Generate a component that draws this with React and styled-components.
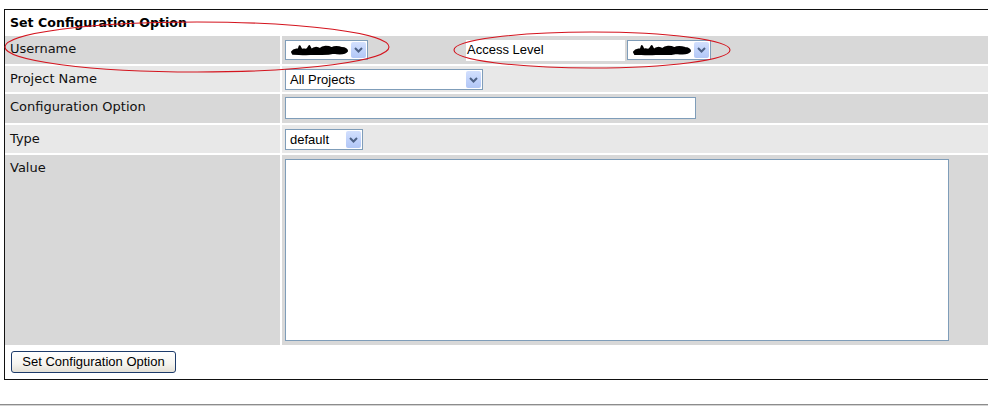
import React from "react";
import styled, { createGlobalStyle } from "styled-components";

const GlobalStyle = createGlobalStyle`
  html, body { margin: 0; padding: 0; background: #fff; overflow: hidden; }
  body { width: 988px; height: 406px; }
`;

const Page = styled.div`
  position: relative;
  width: 988px;
  height: 406px;
  padding: 9px 0 0 4px;
  box-sizing: border-box;
  overflow: hidden;
`;

const Panel = styled.div`
  width: 1100px;
  border: 1px solid #111;
  display: flex;
  flex-direction: column;
  gap: 2px;
`;

const TitleRow = styled.div`
  height: 24px;
  box-sizing: border-box;
  padding: 5px 0 0 5px;
  font-family: "DejaVu Sans", Verdana, sans-serif;
  font-weight: bold;
  font-size: 12.6px;
  line-height: 15px;
  color: #000;
`;

const Row = styled.div`
  display: grid;
  grid-template-columns: 275px 1fr;
  column-gap: 2px;
  height: ${(p) => p.$h}px;
`;

const Label = styled.div`
  background: ${(p) => (p.$light ? "#e8e8e8" : "#d8d8d8")};
  box-sizing: border-box;
  padding: ${(p) => p.$pt ?? 5}px 0 0 5px;
  font-family: "DejaVu Sans", Verdana, sans-serif;
  font-size: 13px;
  line-height: 15px;
  color: #111;
`;

const Cell = styled.div`
  background: ${(p) => (p.$light ? "#e8e8e8" : "#d8d8d8")};
  box-sizing: border-box;
  padding: ${(p) => p.$pt}px 0 0 3px;
  display: flex;
  align-items: flex-start;
`;

const SelectBox = styled.div`
  width: ${(p) => p.$w}px;
  height: ${(p) => p.$h || 20}px;
  margin-left: ${(p) => p.$ml || 0}px;
  box-sizing: border-box;
  border: 1px solid #7f9db9;
  background: #fff;
  display: flex;
  align-items: stretch;
  font-family: "Liberation Sans", Arial, sans-serif;
  font-size: 13px;
  color: #000;
`;

const SelectText = styled.div`
  flex: 1;
  display: flex;
  align-items: center;
  padding-left: 4px;
  overflow: hidden;
  white-space: nowrap;
`;

const Arrow = styled.div`
  width: 15px;
  margin: 1px;
  border-radius: 2px;
  background: linear-gradient(180deg, #d3e0fd 0%, #c1d3fb 50%, #b2c7f6 100%);
  display: flex;
  align-items: center;
  justify-content: center;
`;

const TextBox = styled.div`
  width: ${(p) => p.$w}px;
  height: ${(p) => p.$h}px;
  box-sizing: border-box;
  border: 1px solid #7f9db9;
  background: #fff;
`;

const AccessLabel = styled.div`
  width: 159px;
  height: 21px;
  margin-left: 98px;
  box-sizing: border-box;
  background: #fff;
  padding: 2px 0 0 1px;
  font-family: "Liberation Sans", Arial, sans-serif;
  font-size: 13px;
  line-height: 15px;
  color: #000;
`;

const ButtonRow = styled.div`
  height: 32px;
  box-sizing: border-box;
  padding: 4px 0 0 6px;
`;

const Button = styled.button`
  width: 165px;
  height: 22px;
  box-sizing: border-box;
  border: 1px solid #1d3b6a;
  border-radius: 3px;
  background: linear-gradient(180deg, #ffffff 0%, #f5f4ef 60%, #e3e0d6 100%);
  font-family: "Liberation Sans", Arial, sans-serif;
  font-size: 13px;
  color: #000;
  padding: 0;
  line-height: 18px;
`;

const Rule = styled.div`
  margin-top: 24px;
  margin-left: -4px;
  width: 988px;
  border-top: 1px solid #8c8c8c;
  border-bottom: 1px solid #d4d4d4;
`;

const Overlay = styled.svg`
  position: absolute;
  left: 0;
  top: 0;
  pointer-events: none;
`;

const Chevron = () => (
  <svg width="9" height="6" viewBox="0 0 9 6">
    <path d="M1 1 L4.5 4.5 L8 1" fill="none" stroke="#4d6185" strokeWidth="2" />
  </svg>
);

const Scribble = () => (
  <svg width="62" height="12" viewBox="0 0 62 12">
    <path
      d="M2 8 C4 5 7 6 9 5 L10 2 L12 6 C14 4 16 7 18 5 L20 2 L22 6 C25 3 28 3 31 5 C34 2 39 2 43 4 C47 2 51 3 54 4 C57 4 59 6 59 7 C57 10 51 10 45 9 C38 11 30 10 24 10 C17 11 9 10 3 10 Z"
      fill="#000"
      stroke="#000"
      strokeWidth="2"
      strokeLinejoin="round"
    />
  </svg>
);

const Select = ({ w, h, ml, children }) => (
  <SelectBox $w={w} $h={h} $ml={ml}>
    <SelectText>{children}</SelectText>
    <Arrow>
      <Chevron />
    </Arrow>
  </SelectBox>
);

export default function App() {
  return (
    <>
      <GlobalStyle />
      <Page>
        <Panel>
          <TitleRow>Set Configuration Option</TitleRow>
          <Row $h={28}>
            <Label>Username</Label>
            <Cell $pt={4}>
              <Select w={83} h={20}>
                <Scribble />
              </Select>
              <AccessLabel>Access Level</AccessLabel>
              <Select w={84} h={20} ml={2}>
                <Scribble />
              </Select>
            </Cell>
          </Row>
          <Row $h={26}>
            <Label $light>Project Name</Label>
            <Cell $light $pt={3}>
              <Select w={198} h={21}>
                All Projects
              </Select>
            </Cell>
          </Row>
          <Row $h={29}>
            <Label>Configuration Option</Label>
            <Cell $pt={3}>
              <TextBox $w={411} $h={22} />
            </Cell>
          </Row>
          <Row $h={28}>
            <Label $light $pt={6}>Type</Label>
            <Cell $light $pt={4}>
              <Select w={78} h={21}>
                default
              </Select>
            </Cell>
          </Row>
          <Row $h={190}>
            <Label>Value</Label>
            <Cell $pt={4}>
              <TextBox $w={664} $h={182} />
            </Cell>
          </Row>
          <ButtonRow>
            <Button type="button">Set Configuration Option</Button>
          </ButtonRow>
        </Panel>
        <Rule />
        <Overlay width="988" height="406" viewBox="0 0 988 406">
          <ellipse cx="197" cy="47" rx="192" ry="25" fill="none" stroke="#d4141e" strokeWidth="1.1" />
          <ellipse cx="592" cy="50" rx="138" ry="18" fill="none" stroke="#d4141e" strokeWidth="1.1" />
        </Overlay>
      </Page>
    </>
  );
}
